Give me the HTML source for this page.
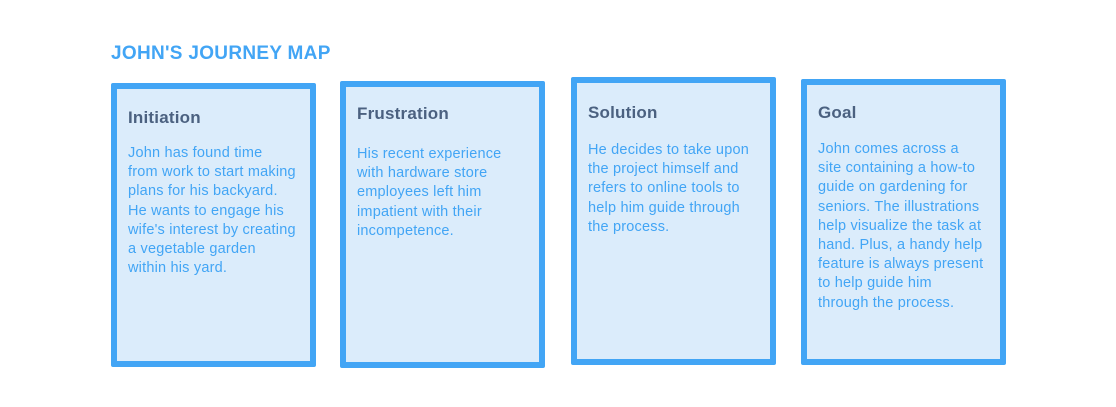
<!DOCTYPE html>
<html><head><style>
body{margin:0;width:1116px;height:407px;background:#fff;font-family:"Liberation Sans",sans-serif;position:relative;overflow:hidden}
h1{position:absolute;left:111px;top:43px;margin:0;font-size:19px;font-weight:bold;color:#42a5f5;letter-spacing:0.3px}
.c{position:absolute;width:193px;background:#dbecfb;border:6px solid #42a5f5;border-radius:2px;box-sizing:content-box}
.c h2{position:absolute;left:11px;margin:0;font-size:17px;font-weight:bold;color:#4b6180;letter-spacing:0.2px}
.c p{position:absolute;left:11px;margin:0;font-size:14.5px;line-height:19.2px;color:#42a5f5;white-space:nowrap;letter-spacing:0.2px}
</style></head><body>
<h1>JOHN'S JOURNEY MAP</h1>
<div class="c" style="left:111px;top:83px;height:272px">
<h2 style="top:19px">Initiation</h2>
<p style="top:55px">John has found time<br>from work to start making<br>plans for his backyard.<br>He wants to engage his<br>wife's interest by creating<br>a vegetable garden<br>within his yard.</p></div>
<div class="c" style="left:340px;top:81px;height:275px">
<h2 style="top:17px">Frustration</h2>
<p style="top:58px">His recent experience<br>with hardware store<br>employees left him<br>impatient with their<br>incompetence.</p></div>
<div class="c" style="left:571px;top:77px;height:276px">
<h2 style="top:20px">Solution</h2>
<p style="top:58px">He decides to take upon<br>the project himself and<br>refers to online tools to<br>help him guide through<br>the process.</p></div>
<div class="c" style="left:801px;top:79px;height:274px">
<h2 style="top:18px">Goal</h2>
<p style="top:55px">John comes across a<br>site containing a how-to<br>guide on gardening for<br>seniors. The illustrations<br>help visualize the task at<br>hand. Plus, a handy help<br>feature is always present<br>to help guide him<br>through the process.</p></div>
</body></html>
